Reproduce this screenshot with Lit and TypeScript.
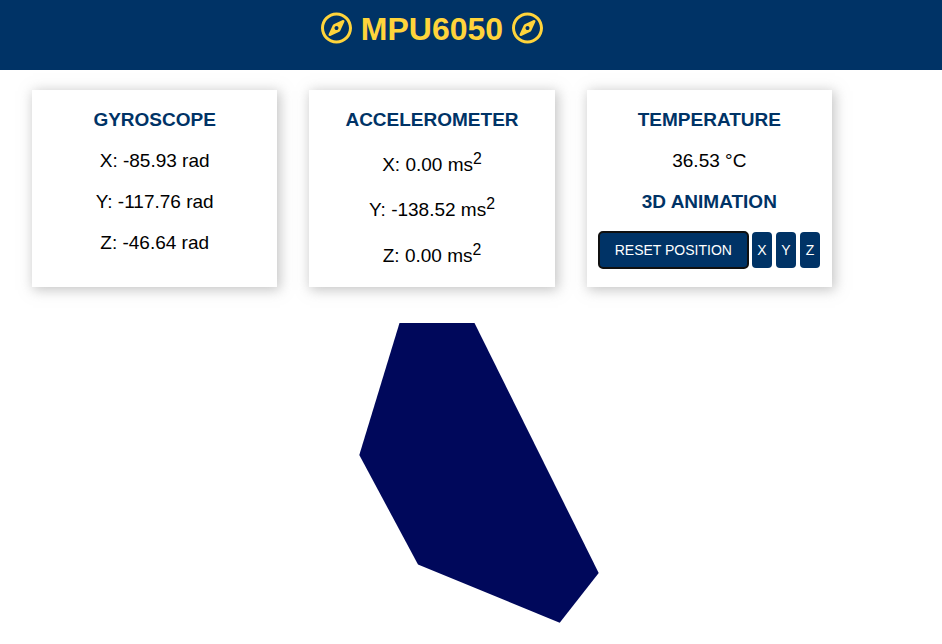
import { LitElement, html, css, svg } from "lit";
import { customElement, property } from "lit/decorators.js";

const COMPASS =
  "M347.94 129.86L203.6 195.83a31.938 31.938 0 0 0-15.77 15.77l-65.97 144.34c-7.61 16.65 9.54 33.81 26.2 26.2l144.34-65.97a31.938 31.938 0 0 0 15.77-15.77l65.97-144.34c7.61-16.66-9.54-33.81-26.2-26.2zm-77.36 148.72c-12.47 12.47-32.69 12.47-45.16 0-12.47-12.47-12.47-32.69 0-45.16 12.47-12.47 32.69-12.47 45.16 0 12.47 12.47 12.47 32.69 0 45.16zM248 8C111.03 8 0 119.03 0 256s111.03 248 248 248 248-111.03 248-248S384.97 8 248 8zm0 448c-110.28 0-200-89.72-200-200S137.72 56 248 56s200 89.72 200 200-89.72 200-200 200z";

const compass = () => html`
  <svg class="icon" viewBox="0 0 496 512" aria-hidden="true">
    ${svg`<path d=${COMPASS} fill="currentColor"></path>`}
  </svg>
`;

interface Reading {
  axis: string;
  value: number;
}

@customElement("app-root")
export class AppRoot extends LitElement {
  @property({ attribute: false }) gyro: Reading[] = [
    { axis: "X", value: -85.93 },
    { axis: "Y", value: -117.76 },
    { axis: "Z", value: -46.64 },
  ];

  @property({ attribute: false }) accel: Reading[] = [
    { axis: "X", value: 0 },
    { axis: "Y", value: -138.52 },
    { axis: "Z", value: 0 },
  ];

  @property({ type: Number }) temperature = 36.53;

  static styles = css`
    :host {
      display: block;
      font-family: "Liberation Sans", Arial, sans-serif;
      font-size: 19px;
      line-height: normal;
      color: #000;
    }
    .topnav {
      background: #003366;
      color: #ffd43b;
    }
    .title {
      box-sizing: border-box;
      max-width: 864px;
      margin: 0;
      padding: 12px 32px 24px;
      display: flex;
      align-items: flex-start;
      justify-content: center;
      gap: 9px;
      font-size: 32px;
      line-height: 34px;
      font-weight: bold;
    }
    .icon {
      width: 31px;
      height: 32px;
      flex: none;
    }
    .content {
      box-sizing: border-box;
      max-width: 864px;
      padding: 20px 32px;
    }
    .cards {
      display: grid;
      grid-template-columns: repeat(auto-fit, minmax(200px, 1fr));
      gap: 32px;
    }
    .card {
      background: #fff;
      box-shadow: 2px 2px 12px 1px rgba(140, 140, 140, 0.5);
      text-align: center;
      padding: 19px 0;
      display: flex;
      flex-direction: column;
      gap: 19px;
    }
    .card-title {
      margin: 0;
      font-size: inherit;
      font-weight: bold;
      color: #003366;
    }
    .reading {
      margin: 0;
    }
    .buttons {
      display: flex;
      justify-content: center;
      gap: 4px;
    }
    button {
      box-sizing: border-box;
      height: 36px;
      border: 0;
      border-radius: 4px;
      background: #003366;
      color: #fff;
      font: 14px "Liberation Sans", Arial, sans-serif;
      cursor: pointer;
    }
    .reset {
      padding: 0 16px;
      outline: 2px solid #101010;
      outline-offset: -1px;
    }
    .axis {
      width: 20px;
      padding: 0;
    }
    .scene {
      display: block;
      width: 100%;
      margin-top: 36px;
    }
  `;

  render() {
    return html`
      <header class="topnav">
        <h1 class="title">${compass()}<span>MPU6050</span>${compass()}</h1>
      </header>
      <main class="content">
        <div class="cards">
          <section class="card">
            <h2 class="card-title">GYROSCOPE</h2>
            ${this.gyro.map(
              (r) => html`<p class="reading">${r.axis}: ${r.value.toFixed(2)} rad</p>`,
            )}
          </section>
          <section class="card">
            <h2 class="card-title">ACCELEROMETER</h2>
            ${this.accel.map(
              (r) =>
                html`<p class="reading">${r.axis}: ${r.value.toFixed(2)} ms<sup>2</sup></p>`,
            )}
          </section>
          <section class="card">
            <h2 class="card-title">TEMPERATURE</h2>
            <p class="reading">${this.temperature.toFixed(2)} °C</p>
            <h2 class="card-title">3D ANIMATION</h2>
            <div class="buttons">
              <button class="reset" type="button">RESET POSITION</button>
              <button class="axis" type="button">X</button>
              <button class="axis" type="button">Y</button>
              <button class="axis" type="button">Z</button>
            </div>
          </section>
        </div>
        <svg class="scene" viewBox="0 0 800 300" role="img" aria-label="Sensor orientation">
          <polygon
            points="367.5,0 442.5,0 566.7,250 527.7,299.7 386,241.5 327.3,132"
            fill="#00085b"
          ></polygon>
        </svg>
      </main>
    `;
  }
}
